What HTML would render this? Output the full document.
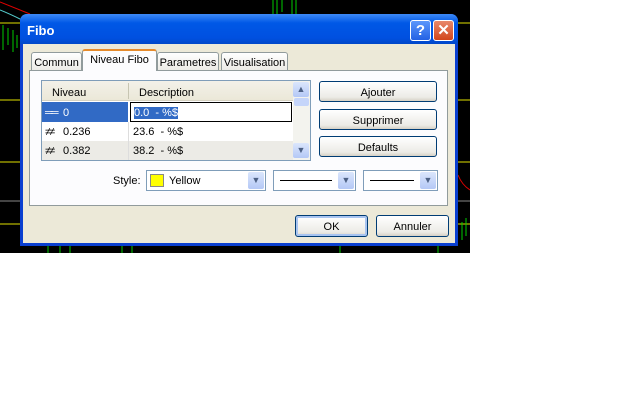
<!DOCTYPE html>
<html><head><meta charset="utf-8"><style>
*{margin:0;padding:0;box-sizing:border-box}
body{width:640px;height:400px;background:#fff;position:relative;overflow:hidden;font-family:"Liberation Sans",sans-serif;font-size:11px;color:#000}
.a{position:absolute}
.btn{position:absolute;border:1px solid #003c74;border-radius:3px;background:linear-gradient(#fff,#ecebe6 80%,#d6d0c5);text-align:center;font-size:11px}
.tab{position:absolute;border:1px solid #919b9c;border-bottom:none;border-radius:3px 3px 0 0;background:linear-gradient(#fff,#ecebe6);text-align:center;font-size:11px;padding-top:4px}
.combo{position:absolute;background:#fff;border:1px solid #7f9db9}
.dd{position:absolute;right:1px;top:1px;width:16px;height:17px;background:linear-gradient(#dbe6fc,#b4c8f6);border-radius:2px;color:#4d6185;font-size:9px;text-align:center;line-height:17px}
.g{display:inline-block;width:18px;letter-spacing:-2px}
</style></head><body>
<div class="a" style="left:0;top:0;width:470px;height:253px;background:#000"></div>
<svg class="a" style="left:0;top:0" width="470" height="253">
<line x1="0" y1="23" x2="470" y2="23" stroke="#e0e000"/>
<line x1="0" y1="100" x2="470" y2="100" stroke="#e0e000"/>
<line x1="0" y1="162" x2="470" y2="162" stroke="#e0e000"/>
<line x1="0" y1="201" x2="470" y2="201" stroke="#888"/>
<line x1="0" y1="224" x2="470" y2="224" stroke="#e0e000"/>
<path d="M0 2 Q15 8 30 14" stroke="#d00" fill="none"/>
<path d="M0 10 Q10 14 22 20" stroke="#5cc" fill="none"/>
<g stroke="#0c0"><line x1="3" y1="25" x2="3" y2="50"/><line x1="8" y1="28" x2="8" y2="45"/><line x1="13" y1="30" x2="13" y2="52"/><line x1="17" y1="35" x2="17" y2="48"/>
<line x1="273" y1="0" x2="273" y2="14"/><line x1="277" y1="0" x2="277" y2="14"/><line x1="282" y1="0" x2="282" y2="12"/><line x1="292" y1="0" x2="292" y2="14"/><line x1="296" y1="0" x2="296" y2="14"/>
<line x1="48" y1="246" x2="48" y2="253"/><line x1="60" y1="246" x2="60" y2="253"/><line x1="70" y1="246" x2="70" y2="253"/><line x1="122" y1="246" x2="122" y2="253"/><line x1="132" y1="246" x2="132" y2="253"/><line x1="340" y1="246" x2="340" y2="253"/><line x1="438" y1="246" x2="438" y2="253"/>
<line x1="462" y1="222" x2="462" y2="240"/><line x1="466" y1="218" x2="466" y2="236"/></g>
<path d="M458 175 Q462 185 470 190" stroke="#d00" fill="none"/>
</svg>
<div class="a" style="left:20px;top:14px;width:438px;height:232px;background:#0a3fd0;border-radius:7px 7px 0 0"></div>
<div class="a" style="left:20px;top:14px;width:438px;height:30px;background:linear-gradient(#3d8af7,#0058e6 30%,#0050e0 80%,#0047c8);border-radius:7px 7px 0 0"></div>
<div class="a" style="left:27px;top:23px;color:#fff;font-weight:bold;font-size:13px">Fibo</div>
<div class="a" style="left:410px;top:20px;width:21px;height:21px;border:1px solid #fff;border-radius:3px;background:linear-gradient(#5b97fb,#2461e4);color:#fff;font-weight:bold;font-size:15px;text-align:center;line-height:19px">?</div>
<div class="a" style="left:433px;top:20px;width:21px;height:21px;border:1px solid #fff;border-radius:3px;background:linear-gradient(#e8886a,#d2451c);color:#fff;font-weight:bold;font-size:15px;text-align:center;line-height:19px">✕</div>
<div class="a" style="left:23px;top:44px;width:432px;height:199px;background:#ece9d8"></div>
<div class="a" style="left:29px;top:70px;width:419px;height:136px;background:#fcfcfe;border:1px solid #919b9c"></div>
<div class="tab" style="left:31px;top:52px;width:51px;height:18px">Commun</div>
<div class="tab" style="left:82px;top:49px;width:75px;height:22px;background:#fcfcfe;border-top:2px solid #e68b2c;padding-top:3px">Niveau Fibo</div>
<div class="tab" style="left:157px;top:52px;width:62px;height:18px">Parametres</div>
<div class="tab" style="left:221px;top:52px;width:67px;height:18px">Visualisation</div>
<div class="a" style="left:41px;top:80px;width:270px;height:81px;border:1px solid #7f9db9;background:#fff"></div>
<div class="a" style="left:42px;top:81px;width:251px;height:20px;background:linear-gradient(#f3f1e9,#ebe8d8);border-bottom:1px solid #d6d2c2"></div>
<div class="a" style="left:128px;top:83px;width:1px;height:16px;background:#c7c5b2"></div>
<div class="a" style="left:52px;top:87px">Niveau</div>
<div class="a" style="left:139px;top:87px">Description</div>
<div class="a" style="left:42px;top:102px;width:86px;height:20px;background:#316ac5;color:#fff;padding:5px 0 0 3px"><span class="g">══</span>0</div>
<div class="a" style="left:130px;top:102px;width:162px;height:20px;border:1px solid #000;padding:4px 0 0 3px"><span style="background:#316ac5;color:#fff">0.0&nbsp; - %$</span></div>
<div class="a" style="left:42px;top:122px;width:251px;height:19px;padding:4px 0 0 3px"><span class="g">≠≠</span>0.236</div>
<div class="a" style="left:133px;top:126px">23.6&nbsp; - %$</div>
<div class="a" style="left:42px;top:141px;width:251px;height:19px;background:#ecebe6;padding:4px 0 0 3px"><span class="g">≠≠</span>0.382</div>
<div class="a" style="left:133px;top:145px">38.2&nbsp; - %$</div>
<div class="a" style="left:128px;top:122px;width:1px;height:38px;background:#ddd"></div>
<div class="a" style="left:293px;top:81px;width:17px;height:79px;background:#f3f3ee"></div>
<div class="dd" style="left:293px;top:82px;right:auto;height:15px;line-height:15px">▲</div>
<div class="a" style="left:294px;top:98px;width:15px;height:8px;background:#c5d5fa;border-radius:2px"></div>
<div class="dd" style="left:293px;top:143px;right:auto;height:15px;line-height:15px">▼</div>
<div class="btn" style="left:319px;top:81px;width:118px;height:21px;line-height:22px">Ajouter</div>
<div class="btn" style="left:319px;top:109px;width:118px;height:21px;line-height:22px">Supprimer</div>
<div class="btn" style="left:319px;top:136px;width:118px;height:21px;line-height:22px">Defaults</div>
<div class="a" style="left:113px;top:175px">Style:</div>
<div class="combo" style="left:146px;top:170px;width:120px;height:21px"><div class="a" style="left:3px;top:3px;width:14px;height:13px;background:#ff0;border:1px solid #888"></div><div class="a" style="left:22px;top:4px">Yellow</div><div class="dd">▼</div></div>
<div class="combo" style="left:273px;top:170px;width:83px;height:21px"><div class="a" style="left:6px;top:9px;width:52px;height:1px;background:#000"></div><div class="dd">▼</div></div>
<div class="combo" style="left:363px;top:170px;width:75px;height:21px"><div class="a" style="left:6px;top:9px;width:44px;height:1px;background:#000"></div><div class="dd">▼</div></div>
<div class="btn" style="left:295px;top:215px;width:73px;height:22px;line-height:22px;box-shadow:inset 0 0 0 2px #a8c4f0">OK</div>
<div class="btn" style="left:376px;top:215px;width:73px;height:22px;line-height:22px">Annuler</div>
</body></html>
